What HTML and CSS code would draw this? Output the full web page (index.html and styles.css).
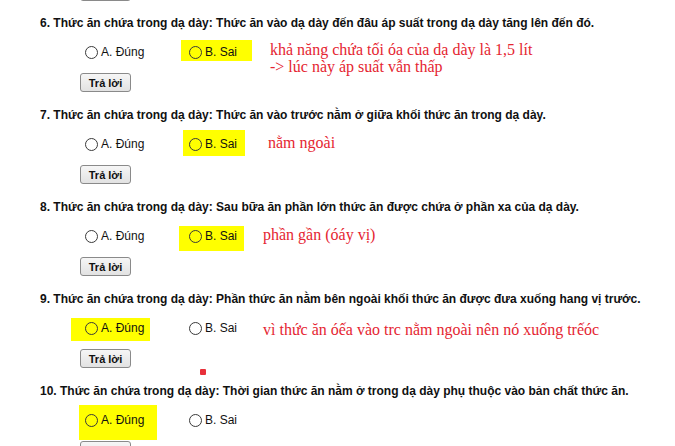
FILE: index.html
```html
<!DOCTYPE html>
<html lang="vi">
<head>
<meta charset="utf-8">
<title>Câu hỏi</title>
<link rel="stylesheet" href="styles.css">
</head>
<body>
<div class="page">
  <div class="prev"><button class="submit">Trả lời</button></div>

  <section class="q">
    <p class="title">6. Thức ăn chứa trong dạ dày: Thức ăn vào dạ dày đến đâu áp suất trong dạ dày tăng lên đến đó.</p>
    <div class="opts">
      <label class="opt opt-a"><span class="radio"></span>A. Đúng</label>
      <label class="opt opt-b hl hl6"><span class="radio"></span>B. Sai</label>
      <div class="note note6">khả năng chứa tối óa của dạ dày là 1,5 lít<br>-&gt; lúc này áp suất vẫn thấp</div>
    </div>
    <button class="submit">Trả lời</button>
  </section>

  <section class="q">
    <p class="title">7. Thức ăn chứa trong dạ dày: Thức ăn vào trước nằm ở giữa khối thức ăn trong dạ dày.</p>
    <div class="opts">
      <label class="opt opt-a"><span class="radio"></span>A. Đúng</label>
      <label class="opt opt-b hl hl7"><span class="radio"></span>B. Sai</label>
      <div class="note note7">nằm ngoài</div>
    </div>
    <button class="submit">Trả lời</button>
  </section>

  <section class="q">
    <p class="title">8. Thức ăn chứa trong dạ dày: Sau bữa ăn phần lớn thức ăn được chứa ở phần xa của dạ dày.</p>
    <div class="opts">
      <label class="opt opt-a"><span class="radio"></span>A. Đúng</label>
      <label class="opt opt-b hl hl8"><span class="radio"></span>B. Sai</label>
      <div class="note note8">phần gần (óáy vị)</div>
    </div>
    <button class="submit">Trả lời</button>
  </section>

  <section class="q">
    <p class="title">9. Thức ăn chứa trong dạ dày: Phần thức ăn nằm bên ngoài khối thức ăn được đưa xuống hang vị trước.</p>
    <div class="opts">
      <label class="opt opt-a hl hl9"><span class="radio"></span>A. Đúng</label>
      <label class="opt opt-b"><span class="radio"></span>B. Sai</label>
      <div class="note note9">vì thức ăn óếa vào trc nằm ngoài nên nó xuống trếóc</div>
    </div>
    <button class="submit">Trả lời<span class="dot"></span></button>
  </section>

  <section class="q">
    <p class="title">10. Thức ăn chứa trong dạ dày: Thời gian thức ăn nằm ở trong dạ dày phụ thuộc vào bản chất thức ăn.</p>
    <div class="opts">
      <label class="opt opt-a hl hl10"><span class="radio"></span>A. Đúng</label>
      <label class="opt opt-b"><span class="radio"></span>B. Sai</label>
    </div>
    <button class="submit">Trả lời</button>
  </section>
</div>
</body>
</html>
```

FILE: styles.css
```css
html, body {
  margin: 0;
  padding: 0;
  background: #ffffff;
  overflow: hidden;
}

.page {
  width: 675px;
  height: 446px;
  overflow: hidden;
  font-family: "Liberation Sans", Arial, sans-serif;
  color: #111;
}

.prev {
  display: flex;
  height: 1px;
  padding-left: 80px;
  margin-bottom: 13px;
}

.q {
  height: 79px;
  margin-bottom: 13px;
  display: flex;
  flex-direction: column;
}

.title {
  margin: 0;
  padding: 1px 0 0 40px;
  height: 16px;
  line-height: 16px;
  font-size: 12px;
  font-weight: bold;
  white-space: nowrap;
}

.opts {
  margin-top: 8px;
  height: 26px;
  display: flex;
  align-items: center;
  padding-left: 85px;
}

.opt {
  display: flex;
  align-items: center;
  flex-shrink: 0;
  font-size: 12px;
  line-height: 16px;
  height: 16px;
  position: relative;
}

.opt-a {
  width: 104px;
}

.opt-b {
  width: 60px;
}

.radio {
  width: 11px;
  height: 11px;
  border: 1px solid #3a3a3a;
  border-radius: 50%;
  margin-right: 3px;
  flex-shrink: 0;
}

.hl {
  z-index: 0;
}

.hl::before {
  content: "";
  position: absolute;
  background: #ffff00;
  z-index: -1;
}

.hl6::before { left: -8px; right: -3px; top: -4px; bottom: -1px; }
.hl7::before { left: -6px; right: 4px; top: -6px; bottom: -4px; }
.hl8::before { left: -10px; right: 5px; top: -2px; bottom: -7px; }
.hl9::before { left: -14px; right: 39px; top: -2px; bottom: -5px; }
.hl10::before { left: -6px; right: 32px; top: -7px; bottom: -12px; }

.note {
  font-family: "Liberation Serif", "Times New Roman", serif;
  color: #e52531;
  font-size: 16px;
  line-height: 17px;
  white-space: nowrap;
  align-self: flex-start;
}

.note6 { margin-left: 21px; margin-top: 2px; }
.note7 { margin-left: 19px; margin-top: 3px; }
.note8 { margin-left: 14px; margin-top: 3px; }
.note9 { margin-left: 14px; margin-top: 6px; }

.submit {
  margin: 8px 0 0 80px;
  width: 51px;
  height: 19px;
  padding: 0;
  font-family: "Liberation Sans", Arial, sans-serif;
  font-size: 11px;
  font-weight: bold;
  color: #111;
  background: linear-gradient(#f6f6f6, #e2e2e2);
  border: 1px solid #8a8a8a;
  border-radius: 3px;
  position: relative;
  align-self: flex-start;
  flex-shrink: 0;
}

.prev .submit {
  margin: -18px 0 0 0;
}

.dot {
  position: absolute;
  left: 119px;
  top: 19px;
  width: 6px;
  height: 6px;
  background: #e8303a;
  border-radius: 1px;
}
```
